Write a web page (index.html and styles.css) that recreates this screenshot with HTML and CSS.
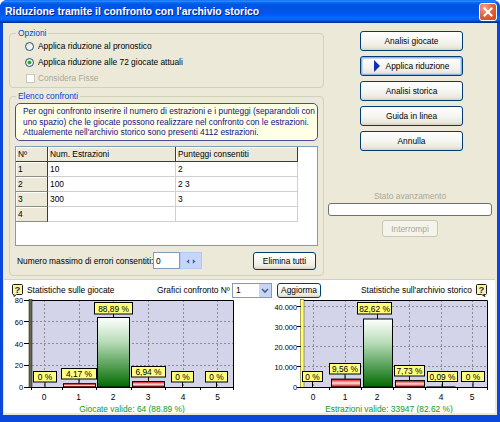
FILE: index.html
```html
<!DOCTYPE html>
<html lang="it">
<head>
<meta charset="utf-8">
<title>Riduzione tramite il confronto con l'archivio storico</title>
<link rel="stylesheet" href="styles.css">
</head>
<body>
<div class="window">
  <div class="titlebar">
    <span class="title">Riduzione tramite il confronto con l'archivio storico</span>
    <span class="close"><svg width="10" height="10" viewBox="0 0 10 10"><path d="M1.5 1.5L8.5 8.5M8.5 1.5L1.5 8.5" stroke="#fff" stroke-width="2" stroke-linecap="square"/></svg></span>
  </div>
  <div class="client">
    <div class="top">
      <div class="leftcol">
        <fieldset class="group opts">
          <legend>Opzioni</legend>
          <div class="opt"><span class="radio"></span><span>Applica riduzione al pronostico</span></div>
          <div class="opt"><span class="radio checked"></span><span>Applica riduzione alle 72 giocate attuali</span></div>
          <div class="opt disabled"><span class="check"></span><span>Considera Fisse</span></div>
        </fieldset>
        <fieldset class="group list">
          <legend>Elenco confronti</legend>
          <div class="info">
            <div>Per ogni confronto inserire il numero di estrazioni e i punteggi (separandoli con</div>
            <div>uno spazio) che le giocate possono realizzare nel confronto con le estrazioni.</div>
            <div>Attualemente nell'archivio storico sono presenti 4112 estrazioni.</div>
          </div>
          <div class="grid">
            <div class="table">
              <div class="gh">Nº</div><div class="gh">Num. Estrazioni</div><div class="gh">Punteggi consentiti</div>
              <div class="rh">1</div><div class="cell">10</div><div class="cell">2</div>
              <div class="rh">2</div><div class="cell">100</div><div class="cell">2 3</div>
              <div class="rh">3</div><div class="cell">300</div><div class="cell">3</div>
              <div class="rh">4</div><div class="cell"></div><div class="cell"></div>
            </div>
          </div>
          <div class="controls">
            <span class="ctl-label">Numero massimo di errori consentiti:</span>
            <span class="num">0</span>
            <span class="spin"><svg width="22" height="17" viewBox="0 0 22 17"><path d="M9 6L6 8.5L9 11Z" fill="#4d6185"/><path d="M13 6L16 8.5L13 11Z" fill="#4d6185"/></svg></span>
            <button class="btn elimina">Elimina tutti</button>
          </div>
        </fieldset>
      </div>
      <div class="rightcol">
        <button class="btn side">Analisi giocate</button>
        <button class="btn side default"><svg class="tri" width="6" height="12" viewBox="0 0 6 12"><path d="M0 0L6 6L0 12Z" fill="#0c2fb8"/></svg><span>Applica riduzione</span></button>
        <button class="btn side">Analisi storica</button>
        <button class="btn side">Guida in linea</button>
        <button class="btn side">Annulla</button>
        <div class="stato">Stato avanzamento</div>
        <div class="progress"></div>
        <button class="btn interrompi">Interrompi</button>
      </div>
    </div>
    <div class="stats">
      <div class="stats-head">
        <div class="sh-left">
          <svg class="help" width="11" height="13" viewBox="0 0 11 13"><path d="M1.5 0.5H9.5Q10.5 0.5 10.5 1.5V9.5Q10.5 10.5 9.5 10.5H4.5L2 12.5V10.5H1.5Q0.5 10.5 0.5 9.5V1.5Q0.5 0.5 1.5 0.5Z" fill="#fff59a" stroke="#1a1a1a"/><text x="5.5" y="9" text-anchor="middle" class="qm">?</text></svg>
          <span>Statistiche sulle giocate</span>
        </div>
        <div class="sh-center">
          <span class="gc-label">Grafici confronto Nº</span>
          <span class="combo"><span class="combo-val">1</span><span class="combo-btn"><svg width="12" height="13" viewBox="0 0 12 13"><path d="M3 5L6 8L9 5" fill="none" stroke="#4d6185" stroke-width="1.6"/></svg></span></span>
          <button class="btn aggiorna">Aggiorma</button>
        </div>
        <div class="sh-right">
          <span>Statistiche sull'archivio storico</span>
          <svg class="help" width="11" height="13" viewBox="0 0 11 13"><path d="M1.5 0.5H9.5Q10.5 0.5 10.5 1.5V9.5Q10.5 10.5 9.5 10.5H7.5L9 12.5L5.5 10.5H1.5Q0.5 10.5 0.5 9.5V1.5Q0.5 0.5 1.5 0.5Z" fill="#fff59a" stroke="#1a1a1a"/><text x="5.5" y="9" text-anchor="middle" class="qm">?</text></svg>
        </div>
      </div>
      <div class="charts">
        <svg class="chart" width="246" height="115" viewBox="4 298 246 115">
          <defs>
            <linearGradient id="gG" x1="0" y1="0" x2="0" y2="1"><stop offset="0" stop-color="#ffffff"/><stop offset="0.35" stop-color="#b8dcb8"/><stop offset="1" stop-color="#006a00"/></linearGradient>
            <linearGradient id="gR" x1="0" y1="0" x2="0" y2="1"><stop offset="0" stop-color="#e00000"/><stop offset="0.5" stop-color="#ffdede"/><stop offset="1" stop-color="#d40000"/></linearGradient>
          </defs>
          <rect x="32" y="300" width="201" height="87" fill="#d3d3ea"/>
          <g stroke="#8c8c8c" stroke-dasharray="2 2" fill="none">
            <path d="M32 321.5H233M32 343.5H233M32 365.5H233"/>
            <path d="M44.5 300V387M79.5 300V387M113.5 300V387M148.5 300V387M183.5 300V387M217.5 300V387"/>
          </g>
          <rect x="29" y="299.5" width="3" height="88" fill="#66664a" stroke="#2b2b1b" stroke-width="0.6"/>
          <path d="M32 300.5H233.5V387.5H29" fill="none" stroke="#000"/>
          <path d="M24 300.5H29M24 321.5H29M24 343.5H29M24 365.5H29M24 387.5H29" stroke="#000"/>
          <path d="M31.5 387V390M62.5 387V390M96.5 387V390M131.5 387V390M165.5 387V390M200.5 387V390M233.5 387V390" stroke="#000"/>
          <g class="ylab">
            <text x="23" y="303">80</text>
            <text x="23" y="324.5">60</text>
            <text x="23" y="346.5">40</text>
            <text x="23" y="368">20</text>
            <text x="23" y="390">0</text>
          </g>
          <g class="xlab">
            <text x="44" y="400">0</text>
            <text x="78.5" y="400">1</text>
            <text x="113" y="400">2</text>
            <text x="148" y="400">3</text>
            <text x="183" y="400">4</text>
            <text x="217.5" y="400">5</text>
          </g>
          <rect x="63.5" y="383.7" width="32" height="3.3" fill="url(#gR)" stroke="#000"/>
          <rect x="97.5" y="317.5" width="32" height="69.5" fill="url(#gG)" stroke="#000"/>
          <rect x="132.5" y="381.6" width="32" height="5.4" fill="url(#gR)" stroke="#000"/>
          <path d="M45 382V387M79 379V383.7M113.5 314V317.5M148.5 377V381.6M182.5 382V387M216.5 382V387" stroke="#000"/>
          <g class="lbl">
            <rect x="33.5" y="371.5" width="23" height="10.5"/>
            <rect x="61.5" y="368.5" width="35" height="10.5"/>
            <rect x="94.5" y="302.5" width="38" height="11.5"/>
            <rect x="131.5" y="366.5" width="34" height="10.5"/>
            <rect x="171.5" y="371.5" width="22" height="10.5"/>
            <rect x="205.5" y="371.5" width="22" height="10.5"/>
          </g>
          <g class="lbltext">
            <text x="45" y="380">0 %</text>
            <text x="79" y="377">4,17 %</text>
            <text x="113.5" y="311.5">88,89 %</text>
            <text x="148.5" y="375">6,94 %</text>
            <text x="182.5" y="380">0 %</text>
            <text x="216.5" y="380">0 %</text>
          </g>
          <text class="valid" x="132" y="411.5">Giocate valide: 64 (88.89 %)</text>
        </svg>
        <svg class="chart" width="245" height="115" viewBox="250 298 245 115">
          <rect x="304" y="300" width="183" height="87" fill="#d3d3ea"/>
          <g stroke="#8c8c8c" stroke-dasharray="2 2" fill="none">
            <path d="M304 306.5H487M304 326.5H487M304 346.5H487M304 366.5H487"/>
            <path d="M313.5 300V387M345.5 300V387M377.5 300V387M409.5 300V387M441.5 300V387M472.5 300V387"/>
          </g>
          <rect x="300.5" y="299.5" width="3.5" height="88" fill="#ffff6a" stroke="#6b6b20" stroke-width="0.6"/>
          <path d="M304 300.5H487.5V387.5H300" fill="none" stroke="#000"/>
          <path d="M297 306.5H301M297 326.5H301M297 346.5H301M297 366.5H301M297 387.5H301" stroke="#000"/>
          <path d="M329.5 387V390M361.5 387V390M393.5 387V390M425.5 387V390M457.5 387V390M487.5 387V390" stroke="#000"/>
          <g class="ylab">
            <text x="297" y="309.5">40.000</text>
            <text x="297" y="329.5">30.000</text>
            <text x="297" y="349.5">20.000</text>
            <text x="297" y="369.5">10.000</text>
            <text x="297" y="390">0</text>
          </g>
          <g class="xlab">
            <text x="313" y="400">0</text>
            <text x="345" y="400">1</text>
            <text x="377" y="400">2</text>
            <text x="409" y="400">3</text>
            <text x="441" y="400">4</text>
            <text x="472" y="400">5</text>
          </g>
          <rect x="331.5" y="379.1" width="29" height="7.9" fill="url(#gR)" stroke="#000"/>
          <rect x="363.5" y="319" width="29" height="68" fill="url(#gG)" stroke="#000"/>
          <rect x="395.5" y="380.6" width="29" height="6.4" fill="url(#gR)" stroke="#000"/>
          <path d="M426.5 386.9H455.5" stroke="#000"/>
          <path d="M312.5 381.5V387M345 374V379.1M377.5 314V319M409.5 376V380.6M442.5 381.5V387M473 381.5V387" stroke="#000"/>
          <g class="lbl">
            <rect x="302.5" y="371.5" width="20" height="10"/>
            <rect x="329.5" y="363.5" width="31" height="10.5"/>
            <rect x="357.5" y="302.5" width="34" height="11.5"/>
            <rect x="394.5" y="365.5" width="30" height="10.5"/>
            <rect x="427.5" y="371.5" width="30" height="10"/>
            <rect x="461.5" y="371.5" width="23" height="10"/>
          </g>
          <g class="lbltext">
            <text x="312.5" y="379.7">0 %</text>
            <text x="345" y="372">9,56 %</text>
            <text x="374.5" y="311.5">82,62 %</text>
            <text x="409.5" y="374">7,73 %</text>
            <text x="442.5" y="379.7">0,09 %</text>
            <text x="473" y="379.7">0 %</text>
          </g>
          <text class="valid" x="389" y="411.5">Estrazioni valide: 33947 (82.62 %)</text>
        </svg>
      </div>
    </div>
  </div>
</div>
</body>
</html>
```

FILE: styles.css
```css
* { box-sizing: border-box; }
html, body { margin: 0; padding: 0; }
body {
  width: 500px;
  height: 422px;
  overflow: hidden;
  background: #ffffff;
  font-family: "Liberation Sans", Arial, sans-serif;
  font-size: 8.4px;
  line-height: 10px;
  color: #000;
}
.window {
  width: 500px;
  height: 422px;
  display: flex;
  flex-direction: column;
  background: #0a48dc;
  border-radius: 7px 7px 0 0;
  overflow: hidden;
}
.titlebar {
  height: 23px;
  flex: none;
  display: flex;
  align-items: center;
  padding: 0 3px 0 5px;
  background: linear-gradient(to bottom, #0058ee 0%, #3593ff 4%, #288eff 6%, #127dff 8%, #036ffc 10%, #0262ee 14%, #0057e5 20%, #0054e3 24%, #0055eb 56%, #005bf5 66%, #026afe 76%, #0062ef 86%, #0052d6 92%, #0040ab 94%, #003092 100%);
}
.title {
  flex: 1;
  color: #fff;
  font-weight: bold;
  font-size: 10.4px;
  line-height: 14px;
  white-space: nowrap;
  text-shadow: 1px 1px 0 #0f1e8a;
  padding-top: 1px;
}
.close {
  width: 18px;
  height: 18px;
  border: 1px solid #fff;
  border-radius: 3px;
  background: radial-gradient(circle at 30% 25%, #f0a58c 0%, #e4653e 45%, #cc4416 100%);
  display: flex;
  align-items: center;
  justify-content: center;
}
.client {
  flex: 1;
  margin: 0 3px 7px 3px;
  background: #ece9d8;
  display: flex;
  flex-direction: column;
}
.top {
  height: 256px;
  flex: none;
  display: flex;
}
.leftcol {
  width: 321px;
  flex: none;
  padding: 5px 0 0 6px;
}
.group {
  width: 315px;
  margin: 0;
  padding: 0 5px;
  border: 1px solid #d0d0bf;
  border-radius: 4px;
  min-width: 0;
}
.group legend {
  padding: 0 2px;
  margin-left: 1px;
  color: #0046d5;
  line-height: 10px;
}
.opts { padding-bottom: 1px; }
.opt {
  height: 16px;
  display: flex;
  align-items: center;
  white-space: nowrap;
}
.opt.disabled { color: #aca899; }
.radio {
  width: 9px;
  height: 9px;
  margin: 0 4px 0 10px;
  border: 1px solid #1c5180;
  border-radius: 50%;
  background: linear-gradient(135deg, #dcd9cf 0%, #f6f5f1 60%, #ffffff 100%);
  display: flex;
  align-items: center;
  justify-content: center;
}
.radio.checked::after {
  content: "";
  width: 3px;
  height: 3px;
  border-radius: 50%;
  background: #21a121;
  box-shadow: 0 0 0 0.6px #5fd05f;
}
.check {
  width: 9px;
  height: 9px;
  margin: 0 3px 0 11px;
  border: 1px solid #cac8bb;
  background: #ffffff;
}
.list {
  margin-top: 3px;
  padding-bottom: 5px;
}
.info {
  margin-top: 2px;
  padding: 2px 6px 2px 7px;
  border: 1px solid #4b4b9e;
  border-radius: 5px;
  background: #ffffe6;
  color: #12128a;
  line-height: 10.5px;
  white-space: nowrap;
}
.grid {
  margin-top: 5px;
  height: 100px;
  border: 1px solid #7f9db9;
  background: #ffffff;
}
.table {
  display: grid;
  grid-template-columns: 32px 128px 122px;
  grid-auto-rows: 15px;
}
.gh, .rh, .cell {
  padding-left: 2px;
  display: flex;
  align-items: center;
  white-space: nowrap;
  overflow: hidden;
}
.gh {
  background: #ece9d8;
  border-right: 1px solid #3c3c34;
  border-bottom: 1px solid #3c3c34;
  box-shadow: inset 1px 1px 0 #ffffff;
}
.rh {
  background: #ece9d8;
  border-right: 1px solid #3c3c34;
  border-bottom: 1px solid #8e8c80;
  box-shadow: inset 1px 1px 0 #ffffff;
}
.cell {
  border-right: 1px solid #d0d0d0;
  border-bottom: 1px solid #d0d0d0;
}
.controls {
  margin-top: 6px;
  height: 18px;
  display: flex;
  align-items: center;
  padding-left: 2px;
}
.ctl-label { white-space: nowrap; width: 136px; flex: none; }
.num {
  width: 27px;
  height: 17px;
  border: 1px solid #7f9db9;
  background: #fff;
  padding-left: 2px;
  display: flex;
  align-items: center;
}
.spin {
  width: 22px;
  height: 17px;
  background: #c6d6fb;
  border: 1px solid #b4c8f4;
  display: flex;
}
.btn {
  font: inherit;
  font-size: 8.4px;
  line-height: 10px;
  color: #000;
  padding: 0;
  border: 1px solid #003c74;
  border-radius: 3px;
  background: linear-gradient(to bottom, #ffffff 0%, #f5f4ef 55%, #ebe8dc 85%, #d6d0c5 100%);
  display: flex;
  align-items: center;
  justify-content: center;
  white-space: nowrap;
}
.elimina {
  margin-left: auto;
  margin-right: 2px;
  width: 63px;
  height: 18px;
}
.rightcol {
  flex: 1;
  display: flex;
  flex-direction: column;
  align-items: center;
  padding: 8px 5px 0 4px;
}
.side {
  width: 103px;
  height: 20px;
  margin: 0 0 5px 3px;
  flex: none;
}
.side.default {
  box-shadow: inset 0 0 0 1px #90b0ee, inset 0 0 0 2px #c6d8f8;
  gap: 6px;
}
.tri { flex: none; }
.stato {
  margin-top: 35px;
  color: #aca899;
  line-height: 10px;
}
.progress {
  margin-top: 2px;
  width: 164px;
  height: 13px;
  border: 1px solid #6f6f6f;
  border-radius: 3px;
  background: #fff;
}
.interrompi {
  margin-top: 4px;
  width: 56px;
  height: 17px;
  color: #aca899;
  border-color: #c9c7ba;
  background: #f5f4ea;
}
.stats {
  height: 134px;
  flex: none;
  margin: 0 2px 0 1px;
  border-top: 1px solid #d6d2c2;
  background: #ffffff;
  padding-top: 2px;
}
.stats-head {
  height: 16px;
  display: grid;
  grid-template-columns: 153px 171px 1fr;
}
.sh-left, .sh-center, .sh-right {
  display: flex;
  align-items: center;
  white-space: nowrap;
}
.sh-left { padding-left: 8px; gap: 4px; }
.gc-label { width: 73px; flex: none; }
.sh-right { justify-content: flex-end; padding-right: 8px; gap: 4px; }
.help { flex: none; }
.qm {
  font-family: "Liberation Sans", Arial, sans-serif;
  font-weight: bold;
  font-size: 9.5px;
  fill: #1a2a6a;
}
.combo {
  margin-left: 2px;
  width: 40px;
  height: 15px;
  border: 1px solid #7f9db9;
  background: #fff;
  display: flex;
  flex: none;
}
.combo-val {
  flex: 1;
  padding-left: 3px;
  display: flex;
  align-items: center;
}
.combo-btn {
  width: 12px;
  flex: none;
  background: #c6d6fb;
  display: flex;
}
.aggiorna {
  margin-left: 5px;
  width: 44px;
  height: 15px;
  flex: none;
}
.charts {
  display: flex;
  height: 115px;
}
.chart { display: block; flex: none; }
.chart text { font-size: 8.4px; }
.chart .ylab text { text-anchor: end; font-size: 7.4px; }
.xlab text { text-anchor: middle; }
.lbl rect { fill: #ffff80; stroke: #000; stroke-width: 1; }
.lbltext text { text-anchor: middle; }
.chart .valid { text-anchor: middle; fill: #129a12; }
```
